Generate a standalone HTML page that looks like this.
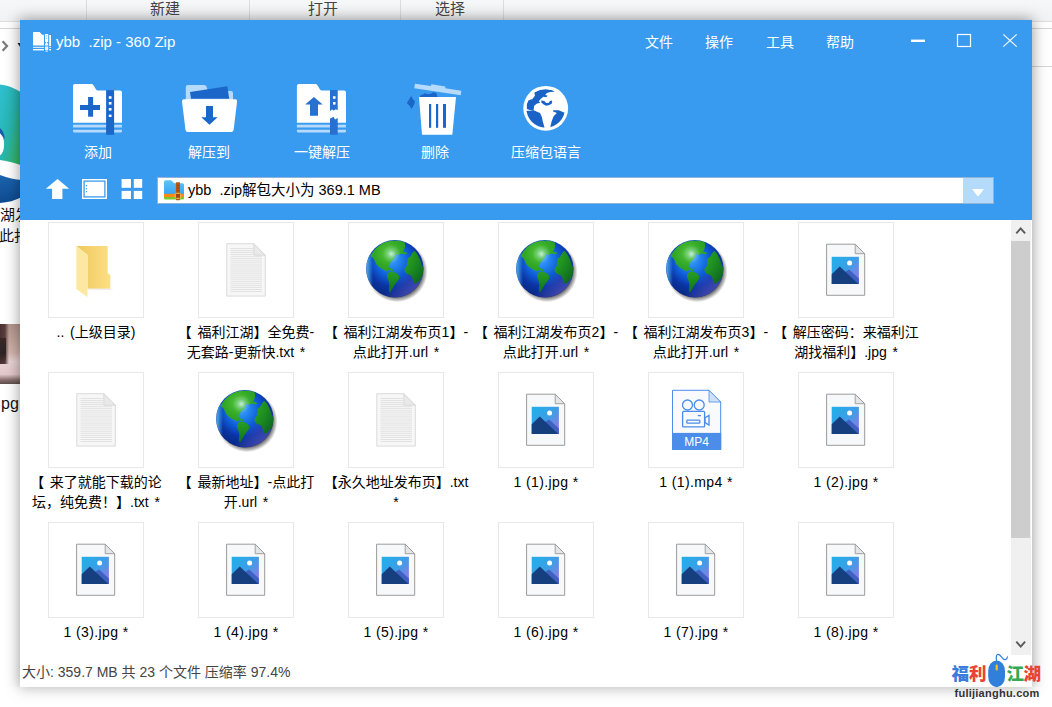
<!DOCTYPE html>
<html lang="zh-CN">
<head>
<meta charset="utf-8">
<title>ybb .zip - 360 Zip</title>
<style>
*{box-sizing:border-box;margin:0;padding:0}
html,body{width:1052px;height:707px;overflow:hidden;background:#fff}
body{position:relative;font-family:"Liberation Sans","Noto Sans CJK SC",sans-serif;color:#000}
.abs{position:absolute}
/* ---------- explorer window behind ---------- */
#ribbon{left:0;top:0;width:1052px;height:22px;background:linear-gradient(#f6f7f8,#f1f2f4);border-bottom:1px solid #dcdddf}
#ribbon i{position:absolute;top:0;width:1px;height:22px;background:#dcdde0}
#ribbon span{position:absolute;top:-2px;font-size:15px;line-height:22px;color:#444;white-space:nowrap;transform:translateX(-50%)}
.bgline{height:1px;background:#d6d6d6}
.bgtxt{font-size:15px;line-height:20px;color:#111;white-space:nowrap}
/* ---------- 360zip window ---------- */
#win{left:20px;top:20px;width:1012px;height:667px;background:#fff;box-shadow:0 0 13px 1px rgba(0,0,0,.38)}
#hdr{left:0;top:0;width:1012px;height:200px;background:#399bf0}
#title{left:36px;top:11px;font-size:15px;line-height:22px;color:#fff;white-space:pre}
.menu{top:11px;font-size:14px;line-height:22px;color:#fff;white-space:nowrap}
.tb{top:121px;width:120px;text-align:center;font-size:14px;line-height:22px;color:#fff;white-space:nowrap}
#addr{left:137px;top:157px;width:836.5px;height:27px;background:#fff;border:1px solid #8fb4d8}
#addr span{position:absolute;left:30px;top:1px;font-size:14.5px;line-height:22px;color:#000;white-space:pre}
#dd{left:943px;top:158px;width:29.5px;height:25px;background:#b4dafc}
/* ---------- file list ---------- */
.th{width:96px;height:96px;border:1px solid #e8e8e8;background:#fff}
.lb{word-spacing:1.8px}
.lb.lt{letter-spacing:.4px;word-spacing:0}
.lb{width:170px;text-align:center;font-size:14px;line-height:19.5px;color:#000;white-space:nowrap}
#sbar{left:991px;top:200px;width:20px;height:435px;background:#f0f0f0}
#thumb{left:991px;top:221px;width:19px;height:297px;background:#cdcdcd}
#status{left:2px;top:640.5px;font-size:14px;line-height:22px;color:#444;white-space:nowrap}
.wmc{top:10px;font-size:17.5px;line-height:26px;font-weight:900;font-family:"Noto Sans CJK SC","Liberation Sans",sans-serif}
#wmu{left:10.5px;top:34.5px;font-size:11px;line-height:16px;font-weight:bold;color:#333;letter-spacing:.25px;white-space:nowrap}
</style>
</head>
<body>

<!-- ===== background explorer window ===== -->
<div id="ribbon" class="abs">
  <i style="left:86px"></i><i style="left:249px"></i><i style="left:400px"></i><i style="left:503px"></i>
  <span style="left:165px">新建</span><span style="left:323px">打开</span><span style="left:450px">选择</span>
</div>
<div class="abs bgline" style="left:0;top:28px;width:20px"></div>
<div class="abs bgline" style="left:1032px;top:28px;width:20px"></div>
<div class="abs bgline" style="left:1032px;top:66px;width:20px"></div>
<svg class="abs" style="left:0;top:36px" width="22" height="20" viewBox="0 0 22 20">
  <path d="M2.6 5.2 L7 10 L2.6 14.8" fill="none" stroke="#7a7a7a" stroke-width="2.2"/>
  <path d="M17.5 7 L21 12.5 L24.5 7Z" fill="#222"/>
</svg>
<!-- edge-like icon fragment -->
<svg class="abs" style="left:0;top:82px" width="22" height="128" viewBox="0 0 22 128">
  <defs>
    <linearGradient id="eg1" x1="0" y1="0" x2="1" y2="1">
      <stop offset="0" stop-color="#2fc0d0"/><stop offset=".5" stop-color="#27b5b0"/><stop offset="1" stop-color="#3bb54a"/>
    </linearGradient>
    <linearGradient id="eg2" x1="0" y1="0" x2="0" y2="1">
      <stop offset="0" stop-color="#1b64b0"/><stop offset="1" stop-color="#0f4a8f"/>
    </linearGradient>
  </defs>
  <path d="M0 2.5 C8 3.5 15 6 22 11 L22 83.5 C15 81 8 79 0 78 L0 73.5 C5.5 70 5.5 55 0 51Z" fill="url(#eg1)"/>
  <path d="M0 46 C3 48.5 4.8 53 4.6 57 L0 51Z" fill="#1a5aa8"/>
  <path d="M0 93 C8 96 15 97.5 22 98 L22 115 C15 118.5 8 120.5 0 121Z" fill="url(#eg2)"/>
</svg>
<div class="abs bgtxt" style="left:0px;top:205px">湖发</div>
<div class="abs bgtxt" style="left:-1px;top:226px">此打</div>
<div class="abs" style="left:0;top:324px;width:20px;height:60px;background:linear-gradient(180deg,#b3958d 0,#c6a9a1 30%,#d4b5ae 48%,#ead3d5 62%,#e2c8ca 84%,#8a7070 93%,#5e4c4c 100%)"></div>
<div class="abs" style="left:0;top:324px;width:9px;height:40px;background:linear-gradient(90deg,#4a3030 0,#5a3e3c 55%,rgba(120,90,85,0) 100%)"></div>
<div class="abs" style="left:0;top:338px;width:6px;height:26px;background:linear-gradient(180deg,#3a2828,#2e2424 60%,rgba(60,44,44,0))"></div>
<div class="abs bgtxt" style="left:1px;top:394px;font-size:16px">pg</div>

<!-- ===== 360 zip window ===== -->
<div id="win" class="abs">
  <div id="hdr" class="abs">
    <svg class="abs" style="left:13px;top:11px" width="20" height="22" viewBox="0 0 20 22">
      <path d="M0 1.6 Q0 1 .6 1 L6.6 1 L9 3.7 L11 3.7 L11 14.6 L0 14.6Z" fill="#fff"/>
      <rect x="0" y="15.8" width="11" height="1.2" fill="#d6eafc"/>
      <rect x="0" y="18" width="11" height="1.4" fill="#fff"/>
      <rect x="12" y="3" width="3.2" height="8" fill="#fff"/>
      <rect x="13.2" y="4.2" width=".9" height="1.4" fill="#7dbcf5"/><rect x="13.2" y="6.6" width=".9" height="1.4" fill="#7dbcf5"/>
      <path d="M12 13 L13.6 10.8 L15.2 13 L15.2 14.4 L12 14.4Z" fill="#fff"/>
      <rect x="12" y="15.4" width="3.2" height="3.6" fill="#e4f1fd"/>
      <rect x="12.4" y="19.6" width="2.6" height=".9" fill="#fff"/>
      <rect x="16.2" y="4" width="1.8" height="11" fill="#fff"/>
      <rect x="16.2" y="15.8" width="1.8" height="1.2" fill="#d6eafc"/>
      <rect x="16.2" y="18" width="1.8" height="1.4" fill="#fff"/>
    </svg>
    <div id="title" class="abs">ybb  .zip - 360 Zip</div>
    <div class="abs menu" style="left:625px">文件</div>
    <div class="abs menu" style="left:685px">操作</div>
    <div class="abs menu" style="left:746px">工具</div>
    <div class="abs menu" style="left:806px">帮助</div>
    <svg class="abs" style="left:885px;top:10px" width="120" height="22" viewBox="0 0 120 22">
      <rect x="6" y="9.6" width="14" height="2.4" fill="#fff"/>
      <rect x="52.5" y="4.5" width="13" height="12" fill="none" stroke="#fff" stroke-width="1.2"/>
      <path d="M98.3 4.3 L111.7 16.7 M111.7 4.3 L98.3 16.7" stroke="#fff" stroke-width="1.1" fill="none"/>
    </svg>
    <!-- add -->
    <svg class="abs" style="left:46px;top:58px" width="66" height="66" viewBox="0 0 66 66">
      <path d="M7 8 Q7 6.1 9 6.1 L25.4 6.1 Q26.8 6.1 27.5 7.3 L30.1 11.6 Q30.8 12.6 32 12.6 L54 12.6 Q56 12.6 56 14.6 L56 44.8 L7 44.8Z" fill="#fff"/>
      <rect x="7" y="46.7" width="49" height="2.8" fill="#b5dafb"/>
      <path d="M7 51.8 H56 V53 Q56 54.6 54.4 54.6 H8.6 Q7 54.6 7 53Z" fill="#b5dafb"/>
      <rect x="40.1" y="12.1" width="8" height="44.7" fill="#1a66c9"/>
      <rect x="42.8" y="18.2" width="2.7" height="2.6" fill="#fff"/><rect x="42.8" y="24" width="2.7" height="2.6" fill="#fff"/>
      <rect x="42.8" y="30" width="2.7" height="2.6" fill="#fff"/><rect x="42.8" y="36.6" width="2.7" height="2.4" fill="#fff"/>
      <rect x="14" y="27" width="20" height="5" fill="#1a66c9"/><rect x="22.1" y="19" width="5" height="19.7" fill="#1a66c9"/>
    </svg>
    <div class="abs tb" style="left:18px">添加</div>
    <!-- extract to -->
    <svg class="abs" style="left:156px;top:58px" width="66" height="66" viewBox="0 0 66 66">
      <path d="M9.8 9 Q9.8 7 11.8 7 L28 7 Q29.6 7 30.3 8.3 L32 12.6 L55 12.9 Q57 13 57 15 L57 22 L9.8 22Z" fill="#b5dafb"/>
      <path d="M14 14 L51.4 8.2 L53.2 20.8 L15 20.8Z" fill="#1a66c9"/>
      <path d="M8 21.3 L59.2 21.3 Q61.4 21.3 61.1 23.4 L57.6 52 Q57.3 54 55.3 54 L11.8 54 Q9.8 54 9.5 52 L6 23.4 Q5.8 21.3 8 21.3Z" fill="#fff"/>
      <path d="M30 28 H37 V39.2 H41.6 L33.5 46.8 L25.3 39.2 H30Z" fill="#1a66c9"/>
    </svg>
    <div class="abs tb" style="left:129px">解压到</div>
    <!-- one click extract -->
    <svg class="abs" style="left:269px;top:58px" width="66" height="66" viewBox="0 0 66 66">
      <path d="M7.9 8 Q7.9 6.1 9.9 6.1 L26.3 6.1 Q27.7 6.1 28.4 7.3 L31 11.6 Q31.7 12.6 32.9 12.6 L55 12.6 Q57 12.6 57 14.6 L57 44.8 L7.9 44.8Z" fill="#fff"/>
      <rect x="7.9" y="46.7" width="49.1" height="2.8" fill="#b5dafb"/>
      <path d="M7.9 51.8 H57 V53 Q57 54.6 55.4 54.6 H9.5 Q7.9 54.6 7.9 53Z" fill="#b5dafb"/>
      <path d="M41 12.1 H48.7 V32.2 L46.8 31.2 L44.8 32.6 L43 31.4 L41 33Z" fill="#2870d0"/>
      <path d="M41 40.4 L43 39.8 L44.6 38.8 L46 41.6 L48.7 40 V56.8 H41Z" fill="#2870d0"/>
      <rect x="44" y="18.2" width="2.5" height="2.6" fill="#fff"/><rect x="44" y="24" width="2.5" height="2.6" fill="#fff"/>
      <path d="M24.9 19 L33.7 26.6 H29 V37.8 H21 V26.6 H16.2Z" fill="#2870d0"/>
    </svg>
    <div class="abs tb" style="left:242px">一键解压</div>
    <!-- delete -->
    <svg class="abs" style="left:380px;top:58px" width="66" height="66" viewBox="0 0 66 66">
      <path d="M19 19 H56 L52.3 56.8 H22Z" fill="#fff"/>
      <rect x="29" y="26" width="2.2" height="23.8" fill="#1a66c9"/><rect x="36" y="26" width="2.2" height="23.8" fill="#1a66c9"/><rect x="43" y="26" width="3" height="23.8" fill="#1a66c9"/>
      <path d="M20 19 Q20 17 23 16.6 L25 15 L27 16.2 L31 15.8 L33.5 14 L36.5 15.2 L37.4 19Z" fill="#1a66c9"/>
      <path d="M15 5.8 L31 8.1 L31.4 6.3 L45.4 8.4 L45.2 10.2 L61.3 12.7 L60.7 17.2 L14.3 10.2Z" fill="#b5dafb"/>
      <path d="M11.2 18 Q12.6 21 15 23.4 Q14.4 27.2 11.6 31 Q9.8 27.6 6.8 25 Q9 21.6 11.2 18Z" fill="#1a66c9"/>
    </svg>
    <div class="abs tb" style="left:355px">删除</div>
    <!-- language -->
    <svg class="abs" style="left:493px;top:58px" width="66" height="66" viewBox="0 0 66 66">
      <defs><clipPath id="lgc"><circle cx="350" cy="325" r="207"/></clipPath></defs>
      <circle cx="32.7" cy="30.3" r="22.4" fill="#fff"/>
      <g fill="#1a63c6" transform="scale(.09337)" clip-path="url(#lgc)">
        <path d="M148 334 L146 284 L164 242 L208 226 L235 190 L228 152 L288 128 L350 120 L422 130 L446 148 L400 150 L362 160 L345 182 L372 190 L355 206 L325 200 L296 225 L276 250 L292 266 L252 276 L226 300 L221 342 L186 346 L150 332Z"/>
        <path d="M304 240 L335 245 L355 268 L385 265 L395 245 L418 240 L419 270 L391 288 L355 297 L325 282 L303 262Z"/>
        <path d="M120 352 L190 350 L216 344 L250 360 L290 375 L310 420 L320 470 L336 522 L336 570 L120 570Z"/>
        <path d="M430 345 L490 345 L546 370 L590 370 L590 570 L398 570 L400 520 L415 460 L435 410 L470 375 L430 360Z"/>
      </g>
    </svg>
    <div class="abs tb" style="left:466px">压缩包语言</div>
    <svg class="abs" style="left:20px;top:155px" width="110" height="30" viewBox="0 0 110 30">
      <path d="M17.5 4 L29.2 13.7 H22.4 V24 H12.1 V13.7 H5.8Z" fill="#fff"/>
      <rect x="42" y="4" width="25" height="20" fill="#fff"/>
      <rect x="44.1" y="6.1" width="20.8" height="15.8" fill="#fff" stroke="#399bf0" stroke-width="1.3"/>
      <rect x="46" y="10" width="1" height="1.2" fill="#399bf0"/><rect x="46" y="13" width="1" height="1.2" fill="#399bf0"/><rect x="46" y="16" width="1" height="1.2" fill="#399bf0"/>
      <rect x="81.6" y="4" width="9.4" height="8.8" fill="#fff"/><rect x="93.8" y="4" width="8.4" height="8.8" fill="#fff"/>
      <rect x="81.6" y="15.9" width="9.4" height="8.1" fill="#fff"/><rect x="93.8" y="15.9" width="8.4" height="8.1" fill="#fff"/>
    </svg>
    <div id="addr" class="abs">
      <svg class="abs" style="left:5px;top:1px" width="24" height="24" viewBox="0 0 24 24">
        <defs><linearGradient id="zg" x1="0" y1="0" x2="0" y2="1"><stop offset="0" stop-color="#5ec4f6"/><stop offset="1" stop-color="#3aa5f5"/></linearGradient></defs>
        <path d="M1 3 Q1 1.3 2.7 1.3 L7.6 1.3 Q8.4 1.3 9 2 L10.6 3.8 Q11 4.2 11.8 4.2 L19.4 4.2 Q21 4.2 21 5.8 L21 15 L1 15Z" fill="url(#zg)"/>
        <rect x="1" y="14.8" width="20" height="3.4" fill="#fb8a0e"/>
        <path d="M1 18 H21 V19.2 Q21 20.5 19.7 20.5 H2.3 Q1 20.5 1 19.2Z" fill="#79c832"/>
        <rect x="12.9" y="3.2" width="4.1" height="18" rx=".6" fill="#b8560f"/>
        <rect x="14" y="6" width="1.9" height=".7" fill="#8a3c06"/><rect x="14" y="8.6" width="1.9" height=".7" fill="#8a3c06"/><rect x="14" y="11.2" width="1.9" height=".7" fill="#8a3c06"/>
        <rect x="12.3" y="14.3" width="5.3" height="5" rx="1" fill="#a04a0c" stroke="#f9bd5c" stroke-width="1"/>
      </svg>
      <span>ybb  .zip解包大小为 369.1 MB</span>
    </div>
    <div id="dd" class="abs"><svg class="abs" style="left:8px;top:10px" width="14" height="9" viewBox="0 0 14 9"><path d="M1 1 H13 L7.6 8 H6.4Z" fill="#fff"/></svg></div>
  </div>
  <!--FILES-BEGIN-->
  <div class="abs th" style="left:28px;top:202px"><svg width="94" height="94" viewBox="1 1 94 94"><defs><linearGradient id="fg0" x1="0" y1="0" x2="1" y2="0"><stop offset="0" stop-color="#ecc85c"/><stop offset=".35" stop-color="#f3d06a"/><stop offset="1" stop-color="#fcdf86"/></linearGradient></defs>
<path d="M28.3 24 H59.7 V51 L62.3 53.2 V66.8 H39.5 V33Z" fill="url(#fg0)"/>
<path d="M28.3 24 L39.5 33 V75 L28.3 67Z" fill="#fde8a2"/>
<path d="M39.5 66.8 H62.3 L66 67.8 H39.5Z" fill="#e9e9e9"/></svg></div>
  <div class="abs lb" style="left:-9px;top:303px">.. (上级目录)</div>
  <div class="abs th" style="left:178px;top:202px"><svg width="94" height="94" viewBox="1 1 94 94">
<path d="M28.8 21.7 H55.8 L67.3 33.2 V74.1 H28.8Z" fill="#f7f7f7" stroke="#dadada" stroke-width="1"/>
<path d="M55.8 21.7 V33.2 H67.3Z" fill="#e9e9e9" stroke="#d4d4d4" stroke-width=".8"/>
<g stroke="#e1e1e1" stroke-width="1"><path d="M32.5 26.5 H55"/><path d="M32.5 28.6 H55"/><path d="M32.5 30.6 H55"/><path d="M32.5 32.6 H55"/><path d="M32.5 34.7 H64"/><path d="M32.5 36.7 H64"/><path d="M32.5 38.8 H64"/><path d="M32.5 40.8 H64"/><path d="M32.5 42.9 H64"/><path d="M32.5 44.9 H64"/><path d="M32.5 47.0 H64"/><path d="M32.5 49.0 H64"/><path d="M32.5 51.1 H64"/><path d="M32.5 53.1 H64"/><path d="M32.5 55.2 H64"/><path d="M32.5 57.2 H64"/><path d="M32.5 59.3 H64"/><path d="M32.5 61.3 H64"/><path d="M32.5 63.4 H64"/><path d="M32.5 65.4 H64"/><path d="M32.5 67.5 H64"/><path d="M32.5 69.5 H64"/></g></svg></div>
  <div class="abs lb" style="left:141px;top:303px">【 福利江湖】全免费-<br>无套路-更新快.txt *</div>
  <div class="abs th" style="left:328px;top:202px"><svg width="94" height="94" viewBox="1 1 94 94"><defs>
<radialGradient id="go2" cx="46" cy="40" r="36" fx="42" fy="36" gradientUnits="userSpaceOnUse"><stop offset="0" stop-color="#49a8fa"/><stop offset=".25" stop-color="#2182ee"/><stop offset=".48" stop-color="#0e5cd6"/><stop offset=".72" stop-color="#0a34a4"/><stop offset="1" stop-color="#08267e"/></radialGradient>
<radialGradient id="gs2" cx=".5" cy=".5" r=".5"><stop offset=".82" stop-color="#000" stop-opacity=".6"/><stop offset="1" stop-color="#000" stop-opacity="0"/></radialGradient>
<radialGradient id="gl2" cx="290" cy="190" r="430" gradientUnits="userSpaceOnUse"><stop offset="0" stop-color="#58c63a"/><stop offset=".3" stop-color="#34a927"/><stop offset=".65" stop-color="#1d8e1f"/><stop offset="1" stop-color="#0d6424"/></radialGradient>
<radialGradient id="gh2" cx="43.5" cy="32" r="9" gradientUnits="userSpaceOnUse"><stop offset="0" stop-color="#e8fbff" stop-opacity=".8"/><stop offset=".5" stop-color="#bff0ff" stop-opacity=".3"/><stop offset="1" stop-color="#bff0ff" stop-opacity="0"/></radialGradient>
<linearGradient id="gp2" x1="0" y1="0" x2="1" y2="1"><stop offset=".62" stop-color="#7a66d8" stop-opacity="0"/><stop offset=".92" stop-color="#7a66d8" stop-opacity=".65"/></linearGradient>
<linearGradient id="gr2" x1="0" y1="0" x2="1" y2="0"><stop offset="0" stop-color="#58c6f8" stop-opacity=".9"/><stop offset=".12" stop-color="#58c6f8" stop-opacity="0"/></linearGradient>
<clipPath id="gc2"><circle cx="46.8" cy="46.8" r="28.6"/></clipPath></defs>
<circle cx="49" cy="49.6" r="30.6" fill="url(#gs2)"/>
<circle cx="46.8" cy="46.8" r="28.7" fill="url(#go2)"/>
<g clip-path="url(#gc2)">
<circle cx="46.8" cy="46.8" r="28.7" fill="url(#gp2)"/>
<g fill="url(#gl2)" transform="translate(12,12) scale(.099)">
<path d="M108 222 L135 175 L172 133 L215 100 L265 78 L320 68 L380 66 L432 73 L455 90 L455 125 L445 160 L432 180 L462 182 L478 197 L455 207 L425 197 L398 205 L378 218 L372 200 L355 215 L350 240 L335 262 L312 280 L295 305 L288 325 L300 345 L325 352 L340 370 L318 375 L300 362 L280 372 L262 378 L240 360 L215 348 L190 330 L165 305 L150 275 L140 250 L120 232Z"/>
<path d="M280 398 L300 385 L330 380 L360 392 L385 410 L400 432 L390 460 L372 485 L352 510 L335 540 L318 570 L305 590 L292 575 L292 545 L298 515 L290 480 L278 450 L272 420Z"/>
<path d="M545 168 L565 185 L585 215 L600 245 L612 275 L622 310 L640 345 L640 420 L600 470 L570 500 L548 500 L535 465 L524 432 L505 415 L475 405 L455 385 L448 360 L458 335 L478 318 L470 300 L482 280 L475 260 L490 240 L505 235 L515 215 L530 190Z"/>
</g>
<circle cx="46.8" cy="46.8" r="28.7" fill="url(#gh2)"/>
<circle cx="46.8" cy="46.8" r="28.7" fill="url(#gr2)"/>
</g>
</svg></div>
  <div class="abs lb" style="left:291px;top:303px">【 福利江湖发布页1】-<br>点此打开.url *</div>
  <div class="abs th" style="left:478px;top:202px"><svg width="94" height="94" viewBox="1 1 94 94"><defs>
<radialGradient id="go3" cx="46" cy="40" r="36" fx="42" fy="36" gradientUnits="userSpaceOnUse"><stop offset="0" stop-color="#49a8fa"/><stop offset=".25" stop-color="#2182ee"/><stop offset=".48" stop-color="#0e5cd6"/><stop offset=".72" stop-color="#0a34a4"/><stop offset="1" stop-color="#08267e"/></radialGradient>
<radialGradient id="gs3" cx=".5" cy=".5" r=".5"><stop offset=".82" stop-color="#000" stop-opacity=".6"/><stop offset="1" stop-color="#000" stop-opacity="0"/></radialGradient>
<radialGradient id="gl3" cx="290" cy="190" r="430" gradientUnits="userSpaceOnUse"><stop offset="0" stop-color="#58c63a"/><stop offset=".3" stop-color="#34a927"/><stop offset=".65" stop-color="#1d8e1f"/><stop offset="1" stop-color="#0d6424"/></radialGradient>
<radialGradient id="gh3" cx="43.5" cy="32" r="9" gradientUnits="userSpaceOnUse"><stop offset="0" stop-color="#e8fbff" stop-opacity=".8"/><stop offset=".5" stop-color="#bff0ff" stop-opacity=".3"/><stop offset="1" stop-color="#bff0ff" stop-opacity="0"/></radialGradient>
<linearGradient id="gp3" x1="0" y1="0" x2="1" y2="1"><stop offset=".62" stop-color="#7a66d8" stop-opacity="0"/><stop offset=".92" stop-color="#7a66d8" stop-opacity=".65"/></linearGradient>
<linearGradient id="gr3" x1="0" y1="0" x2="1" y2="0"><stop offset="0" stop-color="#58c6f8" stop-opacity=".9"/><stop offset=".12" stop-color="#58c6f8" stop-opacity="0"/></linearGradient>
<clipPath id="gc3"><circle cx="46.8" cy="46.8" r="28.6"/></clipPath></defs>
<circle cx="49" cy="49.6" r="30.6" fill="url(#gs3)"/>
<circle cx="46.8" cy="46.8" r="28.7" fill="url(#go3)"/>
<g clip-path="url(#gc3)">
<circle cx="46.8" cy="46.8" r="28.7" fill="url(#gp3)"/>
<g fill="url(#gl3)" transform="translate(12,12) scale(.099)">
<path d="M108 222 L135 175 L172 133 L215 100 L265 78 L320 68 L380 66 L432 73 L455 90 L455 125 L445 160 L432 180 L462 182 L478 197 L455 207 L425 197 L398 205 L378 218 L372 200 L355 215 L350 240 L335 262 L312 280 L295 305 L288 325 L300 345 L325 352 L340 370 L318 375 L300 362 L280 372 L262 378 L240 360 L215 348 L190 330 L165 305 L150 275 L140 250 L120 232Z"/>
<path d="M280 398 L300 385 L330 380 L360 392 L385 410 L400 432 L390 460 L372 485 L352 510 L335 540 L318 570 L305 590 L292 575 L292 545 L298 515 L290 480 L278 450 L272 420Z"/>
<path d="M545 168 L565 185 L585 215 L600 245 L612 275 L622 310 L640 345 L640 420 L600 470 L570 500 L548 500 L535 465 L524 432 L505 415 L475 405 L455 385 L448 360 L458 335 L478 318 L470 300 L482 280 L475 260 L490 240 L505 235 L515 215 L530 190Z"/>
</g>
<circle cx="46.8" cy="46.8" r="28.7" fill="url(#gh3)"/>
<circle cx="46.8" cy="46.8" r="28.7" fill="url(#gr3)"/>
</g>
</svg></div>
  <div class="abs lb" style="left:441px;top:303px">【 福利江湖发布页2】-<br>点此打开.url *</div>
  <div class="abs th" style="left:628px;top:202px"><svg width="94" height="94" viewBox="1 1 94 94"><defs>
<radialGradient id="go4" cx="46" cy="40" r="36" fx="42" fy="36" gradientUnits="userSpaceOnUse"><stop offset="0" stop-color="#49a8fa"/><stop offset=".25" stop-color="#2182ee"/><stop offset=".48" stop-color="#0e5cd6"/><stop offset=".72" stop-color="#0a34a4"/><stop offset="1" stop-color="#08267e"/></radialGradient>
<radialGradient id="gs4" cx=".5" cy=".5" r=".5"><stop offset=".82" stop-color="#000" stop-opacity=".6"/><stop offset="1" stop-color="#000" stop-opacity="0"/></radialGradient>
<radialGradient id="gl4" cx="290" cy="190" r="430" gradientUnits="userSpaceOnUse"><stop offset="0" stop-color="#58c63a"/><stop offset=".3" stop-color="#34a927"/><stop offset=".65" stop-color="#1d8e1f"/><stop offset="1" stop-color="#0d6424"/></radialGradient>
<radialGradient id="gh4" cx="43.5" cy="32" r="9" gradientUnits="userSpaceOnUse"><stop offset="0" stop-color="#e8fbff" stop-opacity=".8"/><stop offset=".5" stop-color="#bff0ff" stop-opacity=".3"/><stop offset="1" stop-color="#bff0ff" stop-opacity="0"/></radialGradient>
<linearGradient id="gp4" x1="0" y1="0" x2="1" y2="1"><stop offset=".62" stop-color="#7a66d8" stop-opacity="0"/><stop offset=".92" stop-color="#7a66d8" stop-opacity=".65"/></linearGradient>
<linearGradient id="gr4" x1="0" y1="0" x2="1" y2="0"><stop offset="0" stop-color="#58c6f8" stop-opacity=".9"/><stop offset=".12" stop-color="#58c6f8" stop-opacity="0"/></linearGradient>
<clipPath id="gc4"><circle cx="46.8" cy="46.8" r="28.6"/></clipPath></defs>
<circle cx="49" cy="49.6" r="30.6" fill="url(#gs4)"/>
<circle cx="46.8" cy="46.8" r="28.7" fill="url(#go4)"/>
<g clip-path="url(#gc4)">
<circle cx="46.8" cy="46.8" r="28.7" fill="url(#gp4)"/>
<g fill="url(#gl4)" transform="translate(12,12) scale(.099)">
<path d="M108 222 L135 175 L172 133 L215 100 L265 78 L320 68 L380 66 L432 73 L455 90 L455 125 L445 160 L432 180 L462 182 L478 197 L455 207 L425 197 L398 205 L378 218 L372 200 L355 215 L350 240 L335 262 L312 280 L295 305 L288 325 L300 345 L325 352 L340 370 L318 375 L300 362 L280 372 L262 378 L240 360 L215 348 L190 330 L165 305 L150 275 L140 250 L120 232Z"/>
<path d="M280 398 L300 385 L330 380 L360 392 L385 410 L400 432 L390 460 L372 485 L352 510 L335 540 L318 570 L305 590 L292 575 L292 545 L298 515 L290 480 L278 450 L272 420Z"/>
<path d="M545 168 L565 185 L585 215 L600 245 L612 275 L622 310 L640 345 L640 420 L600 470 L570 500 L548 500 L535 465 L524 432 L505 415 L475 405 L455 385 L448 360 L458 335 L478 318 L470 300 L482 280 L475 260 L490 240 L505 235 L515 215 L530 190Z"/>
</g>
<circle cx="46.8" cy="46.8" r="28.7" fill="url(#gh4)"/>
<circle cx="46.8" cy="46.8" r="28.7" fill="url(#gr4)"/>
</g>
</svg></div>
  <div class="abs lb" style="left:591px;top:303px">【 福利江湖发布页3】-<br>点此打开.url *</div>
  <div class="abs th" style="left:778px;top:202px"><svg width="94" height="94" viewBox="1 1 94 94"><defs><linearGradient id="ig5" x1="0" y1="0" x2="1" y2=".8"><stop offset="0" stop-color="#1fb0ea"/><stop offset=".55" stop-color="#3b9fe8"/><stop offset="1" stop-color="#8f7ae0"/></linearGradient></defs>
<path d="M28.6 22.2 H57.2 L66.7 31.7 V73.3 H28.6Z" fill="#f7f8f9" stroke="#9b9b9b" stroke-width="1"/>
<path d="M57.2 22.2 V31.7 H66.7Z" fill="#e4e5e6" stroke="#9b9b9b" stroke-width=".9"/>
<rect x="33.7" y="34.8" width="27.2" height="27.2" fill="url(#ig5)"/>
<path d="M47 50 L51.1 47.4 L60.9 56.4 V62 H50Z" fill="#4060c4"/>
<path d="M33.7 52.3 L41.8 44.4 L60.4 62 H33.7Z" fill="#163f7f"/>
<circle cx="51.6" cy="41.1" r="2.5" fill="#fff"/></svg></div>
  <div class="abs lb" style="left:741px;top:303px">【 解压密码：来福利江<br>湖找福利】.jpg *</div>
  <div class="abs th" style="left:28px;top:352px"><svg width="94" height="94" viewBox="1 1 94 94">
<path d="M28.8 21.7 H55.8 L67.3 33.2 V74.1 H28.8Z" fill="#f7f7f7" stroke="#dadada" stroke-width="1"/>
<path d="M55.8 21.7 V33.2 H67.3Z" fill="#e9e9e9" stroke="#d4d4d4" stroke-width=".8"/>
<g stroke="#e1e1e1" stroke-width="1"><path d="M32.5 26.5 H55"/><path d="M32.5 28.6 H55"/><path d="M32.5 30.6 H55"/><path d="M32.5 32.6 H55"/><path d="M32.5 34.7 H64"/><path d="M32.5 36.7 H64"/><path d="M32.5 38.8 H64"/><path d="M32.5 40.8 H64"/><path d="M32.5 42.9 H64"/><path d="M32.5 44.9 H64"/><path d="M32.5 47.0 H64"/><path d="M32.5 49.0 H64"/><path d="M32.5 51.1 H64"/><path d="M32.5 53.1 H64"/><path d="M32.5 55.2 H64"/><path d="M32.5 57.2 H64"/><path d="M32.5 59.3 H64"/><path d="M32.5 61.3 H64"/><path d="M32.5 63.4 H64"/><path d="M32.5 65.4 H64"/><path d="M32.5 67.5 H64"/><path d="M32.5 69.5 H64"/></g></svg></div>
  <div class="abs lb" style="left:-9px;top:453px">【 来了就能下载的论<br>坛，纯免费！】.txt *</div>
  <div class="abs th" style="left:178px;top:352px"><svg width="94" height="94" viewBox="1 1 94 94"><defs>
<radialGradient id="go7" cx="46" cy="40" r="36" fx="42" fy="36" gradientUnits="userSpaceOnUse"><stop offset="0" stop-color="#49a8fa"/><stop offset=".25" stop-color="#2182ee"/><stop offset=".48" stop-color="#0e5cd6"/><stop offset=".72" stop-color="#0a34a4"/><stop offset="1" stop-color="#08267e"/></radialGradient>
<radialGradient id="gs7" cx=".5" cy=".5" r=".5"><stop offset=".82" stop-color="#000" stop-opacity=".6"/><stop offset="1" stop-color="#000" stop-opacity="0"/></radialGradient>
<radialGradient id="gl7" cx="290" cy="190" r="430" gradientUnits="userSpaceOnUse"><stop offset="0" stop-color="#58c63a"/><stop offset=".3" stop-color="#34a927"/><stop offset=".65" stop-color="#1d8e1f"/><stop offset="1" stop-color="#0d6424"/></radialGradient>
<radialGradient id="gh7" cx="43.5" cy="32" r="9" gradientUnits="userSpaceOnUse"><stop offset="0" stop-color="#e8fbff" stop-opacity=".8"/><stop offset=".5" stop-color="#bff0ff" stop-opacity=".3"/><stop offset="1" stop-color="#bff0ff" stop-opacity="0"/></radialGradient>
<linearGradient id="gp7" x1="0" y1="0" x2="1" y2="1"><stop offset=".62" stop-color="#7a66d8" stop-opacity="0"/><stop offset=".92" stop-color="#7a66d8" stop-opacity=".65"/></linearGradient>
<linearGradient id="gr7" x1="0" y1="0" x2="1" y2="0"><stop offset="0" stop-color="#58c6f8" stop-opacity=".9"/><stop offset=".12" stop-color="#58c6f8" stop-opacity="0"/></linearGradient>
<clipPath id="gc7"><circle cx="46.8" cy="46.8" r="28.6"/></clipPath></defs>
<circle cx="49" cy="49.6" r="30.6" fill="url(#gs7)"/>
<circle cx="46.8" cy="46.8" r="28.7" fill="url(#go7)"/>
<g clip-path="url(#gc7)">
<circle cx="46.8" cy="46.8" r="28.7" fill="url(#gp7)"/>
<g fill="url(#gl7)" transform="translate(12,12) scale(.099)">
<path d="M108 222 L135 175 L172 133 L215 100 L265 78 L320 68 L380 66 L432 73 L455 90 L455 125 L445 160 L432 180 L462 182 L478 197 L455 207 L425 197 L398 205 L378 218 L372 200 L355 215 L350 240 L335 262 L312 280 L295 305 L288 325 L300 345 L325 352 L340 370 L318 375 L300 362 L280 372 L262 378 L240 360 L215 348 L190 330 L165 305 L150 275 L140 250 L120 232Z"/>
<path d="M280 398 L300 385 L330 380 L360 392 L385 410 L400 432 L390 460 L372 485 L352 510 L335 540 L318 570 L305 590 L292 575 L292 545 L298 515 L290 480 L278 450 L272 420Z"/>
<path d="M545 168 L565 185 L585 215 L600 245 L612 275 L622 310 L640 345 L640 420 L600 470 L570 500 L548 500 L535 465 L524 432 L505 415 L475 405 L455 385 L448 360 L458 335 L478 318 L470 300 L482 280 L475 260 L490 240 L505 235 L515 215 L530 190Z"/>
</g>
<circle cx="46.8" cy="46.8" r="28.7" fill="url(#gh7)"/>
<circle cx="46.8" cy="46.8" r="28.7" fill="url(#gr7)"/>
</g>
</svg></div>
  <div class="abs lb" style="left:141px;top:453px">【 最新地址】-点此打<br>开.url *</div>
  <div class="abs th" style="left:328px;top:352px"><svg width="94" height="94" viewBox="1 1 94 94">
<path d="M28.8 21.7 H55.8 L67.3 33.2 V74.1 H28.8Z" fill="#f7f7f7" stroke="#dadada" stroke-width="1"/>
<path d="M55.8 21.7 V33.2 H67.3Z" fill="#e9e9e9" stroke="#d4d4d4" stroke-width=".8"/>
<g stroke="#e1e1e1" stroke-width="1"><path d="M32.5 26.5 H55"/><path d="M32.5 28.6 H55"/><path d="M32.5 30.6 H55"/><path d="M32.5 32.6 H55"/><path d="M32.5 34.7 H64"/><path d="M32.5 36.7 H64"/><path d="M32.5 38.8 H64"/><path d="M32.5 40.8 H64"/><path d="M32.5 42.9 H64"/><path d="M32.5 44.9 H64"/><path d="M32.5 47.0 H64"/><path d="M32.5 49.0 H64"/><path d="M32.5 51.1 H64"/><path d="M32.5 53.1 H64"/><path d="M32.5 55.2 H64"/><path d="M32.5 57.2 H64"/><path d="M32.5 59.3 H64"/><path d="M32.5 61.3 H64"/><path d="M32.5 63.4 H64"/><path d="M32.5 65.4 H64"/><path d="M32.5 67.5 H64"/><path d="M32.5 69.5 H64"/></g></svg></div>
  <div class="abs lb" style="left:291px;top:453px">【永久地址发布页】.txt<br>*</div>
  <div class="abs th" style="left:478px;top:352px"><svg width="94" height="94" viewBox="1 1 94 94"><defs><linearGradient id="ig9" x1="0" y1="0" x2="1" y2=".8"><stop offset="0" stop-color="#1fb0ea"/><stop offset=".55" stop-color="#3b9fe8"/><stop offset="1" stop-color="#8f7ae0"/></linearGradient></defs>
<path d="M28.6 22.2 H57.2 L66.7 31.7 V73.3 H28.6Z" fill="#f7f8f9" stroke="#9b9b9b" stroke-width="1"/>
<path d="M57.2 22.2 V31.7 H66.7Z" fill="#e4e5e6" stroke="#9b9b9b" stroke-width=".9"/>
<rect x="33.7" y="34.8" width="27.2" height="27.2" fill="url(#ig9)"/>
<path d="M47 50 L51.1 47.4 L60.9 56.4 V62 H50Z" fill="#4060c4"/>
<path d="M33.7 52.3 L41.8 44.4 L60.4 62 H33.7Z" fill="#163f7f"/>
<circle cx="51.6" cy="41.1" r="2.5" fill="#fff"/></svg></div>
  <div class="abs lb lt" style="left:441px;top:453px">1 (1).jpg *</div>
  <div class="abs th" style="left:628px;top:352px"><svg width="94" height="94" viewBox="1 1 94 94">
<path d="M24.5 18.3 H61 L72.7 30 V77.5 H24.5Z" fill="#f8fafd" stroke="#4b8de9" stroke-width="1"/>
<path d="M61 18.3 V30 H72.7Z" fill="#cfe0f8" stroke="#4b8de9" stroke-width=".8"/>
<rect x="24" y="60.9" width="49.2" height="17.1" fill="#4b8de9"/>
<g fill="none" stroke="#4b8de9" stroke-width="1.3"><circle cx="39.5" cy="33" r="5"/><circle cx="51.2" cy="33" r="5"/>
<rect x="34.6" y="39.3" width="22" height="15.6" rx="1"/><rect x="38.8" y="48.2" width="13" height="3" rx=".8"/><path d="M49.8 43.6 H53"/>
<path d="M57 45.8 L61 43.4 V53 L57 50.6Z"/></g>
<text x="48.6" y="74.2" font-family="Liberation Sans, sans-serif" font-size="13.5" fill="#fff" text-anchor="middle" textLength="24.6" lengthAdjust="spacingAndGlyphs">MP4</text></svg></div>
  <div class="abs lb lt" style="left:591px;top:453px">1 (1).mp4 *</div>
  <div class="abs th" style="left:778px;top:352px"><svg width="94" height="94" viewBox="1 1 94 94"><defs><linearGradient id="ig11" x1="0" y1="0" x2="1" y2=".8"><stop offset="0" stop-color="#1fb0ea"/><stop offset=".55" stop-color="#3b9fe8"/><stop offset="1" stop-color="#8f7ae0"/></linearGradient></defs>
<path d="M28.6 22.2 H57.2 L66.7 31.7 V73.3 H28.6Z" fill="#f7f8f9" stroke="#9b9b9b" stroke-width="1"/>
<path d="M57.2 22.2 V31.7 H66.7Z" fill="#e4e5e6" stroke="#9b9b9b" stroke-width=".9"/>
<rect x="33.7" y="34.8" width="27.2" height="27.2" fill="url(#ig11)"/>
<path d="M47 50 L51.1 47.4 L60.9 56.4 V62 H50Z" fill="#4060c4"/>
<path d="M33.7 52.3 L41.8 44.4 L60.4 62 H33.7Z" fill="#163f7f"/>
<circle cx="51.6" cy="41.1" r="2.5" fill="#fff"/></svg></div>
  <div class="abs lb lt" style="left:741px;top:453px">1 (2).jpg *</div>
  <div class="abs th" style="left:28px;top:502px"><svg width="94" height="94" viewBox="1 1 94 94"><defs><linearGradient id="ig12" x1="0" y1="0" x2="1" y2=".8"><stop offset="0" stop-color="#1fb0ea"/><stop offset=".55" stop-color="#3b9fe8"/><stop offset="1" stop-color="#8f7ae0"/></linearGradient></defs>
<path d="M28.6 22.2 H57.2 L66.7 31.7 V73.3 H28.6Z" fill="#f7f8f9" stroke="#9b9b9b" stroke-width="1"/>
<path d="M57.2 22.2 V31.7 H66.7Z" fill="#e4e5e6" stroke="#9b9b9b" stroke-width=".9"/>
<rect x="33.7" y="34.8" width="27.2" height="27.2" fill="url(#ig12)"/>
<path d="M47 50 L51.1 47.4 L60.9 56.4 V62 H50Z" fill="#4060c4"/>
<path d="M33.7 52.3 L41.8 44.4 L60.4 62 H33.7Z" fill="#163f7f"/>
<circle cx="51.6" cy="41.1" r="2.5" fill="#fff"/></svg></div>
  <div class="abs lb lt" style="left:-9px;top:603px">1 (3).jpg *</div>
  <div class="abs th" style="left:178px;top:502px"><svg width="94" height="94" viewBox="1 1 94 94"><defs><linearGradient id="ig13" x1="0" y1="0" x2="1" y2=".8"><stop offset="0" stop-color="#1fb0ea"/><stop offset=".55" stop-color="#3b9fe8"/><stop offset="1" stop-color="#8f7ae0"/></linearGradient></defs>
<path d="M28.6 22.2 H57.2 L66.7 31.7 V73.3 H28.6Z" fill="#f7f8f9" stroke="#9b9b9b" stroke-width="1"/>
<path d="M57.2 22.2 V31.7 H66.7Z" fill="#e4e5e6" stroke="#9b9b9b" stroke-width=".9"/>
<rect x="33.7" y="34.8" width="27.2" height="27.2" fill="url(#ig13)"/>
<path d="M47 50 L51.1 47.4 L60.9 56.4 V62 H50Z" fill="#4060c4"/>
<path d="M33.7 52.3 L41.8 44.4 L60.4 62 H33.7Z" fill="#163f7f"/>
<circle cx="51.6" cy="41.1" r="2.5" fill="#fff"/></svg></div>
  <div class="abs lb lt" style="left:141px;top:603px">1 (4).jpg *</div>
  <div class="abs th" style="left:328px;top:502px"><svg width="94" height="94" viewBox="1 1 94 94"><defs><linearGradient id="ig14" x1="0" y1="0" x2="1" y2=".8"><stop offset="0" stop-color="#1fb0ea"/><stop offset=".55" stop-color="#3b9fe8"/><stop offset="1" stop-color="#8f7ae0"/></linearGradient></defs>
<path d="M28.6 22.2 H57.2 L66.7 31.7 V73.3 H28.6Z" fill="#f7f8f9" stroke="#9b9b9b" stroke-width="1"/>
<path d="M57.2 22.2 V31.7 H66.7Z" fill="#e4e5e6" stroke="#9b9b9b" stroke-width=".9"/>
<rect x="33.7" y="34.8" width="27.2" height="27.2" fill="url(#ig14)"/>
<path d="M47 50 L51.1 47.4 L60.9 56.4 V62 H50Z" fill="#4060c4"/>
<path d="M33.7 52.3 L41.8 44.4 L60.4 62 H33.7Z" fill="#163f7f"/>
<circle cx="51.6" cy="41.1" r="2.5" fill="#fff"/></svg></div>
  <div class="abs lb lt" style="left:291px;top:603px">1 (5).jpg *</div>
  <div class="abs th" style="left:478px;top:502px"><svg width="94" height="94" viewBox="1 1 94 94"><defs><linearGradient id="ig15" x1="0" y1="0" x2="1" y2=".8"><stop offset="0" stop-color="#1fb0ea"/><stop offset=".55" stop-color="#3b9fe8"/><stop offset="1" stop-color="#8f7ae0"/></linearGradient></defs>
<path d="M28.6 22.2 H57.2 L66.7 31.7 V73.3 H28.6Z" fill="#f7f8f9" stroke="#9b9b9b" stroke-width="1"/>
<path d="M57.2 22.2 V31.7 H66.7Z" fill="#e4e5e6" stroke="#9b9b9b" stroke-width=".9"/>
<rect x="33.7" y="34.8" width="27.2" height="27.2" fill="url(#ig15)"/>
<path d="M47 50 L51.1 47.4 L60.9 56.4 V62 H50Z" fill="#4060c4"/>
<path d="M33.7 52.3 L41.8 44.4 L60.4 62 H33.7Z" fill="#163f7f"/>
<circle cx="51.6" cy="41.1" r="2.5" fill="#fff"/></svg></div>
  <div class="abs lb lt" style="left:441px;top:603px">1 (6).jpg *</div>
  <div class="abs th" style="left:628px;top:502px"><svg width="94" height="94" viewBox="1 1 94 94"><defs><linearGradient id="ig16" x1="0" y1="0" x2="1" y2=".8"><stop offset="0" stop-color="#1fb0ea"/><stop offset=".55" stop-color="#3b9fe8"/><stop offset="1" stop-color="#8f7ae0"/></linearGradient></defs>
<path d="M28.6 22.2 H57.2 L66.7 31.7 V73.3 H28.6Z" fill="#f7f8f9" stroke="#9b9b9b" stroke-width="1"/>
<path d="M57.2 22.2 V31.7 H66.7Z" fill="#e4e5e6" stroke="#9b9b9b" stroke-width=".9"/>
<rect x="33.7" y="34.8" width="27.2" height="27.2" fill="url(#ig16)"/>
<path d="M47 50 L51.1 47.4 L60.9 56.4 V62 H50Z" fill="#4060c4"/>
<path d="M33.7 52.3 L41.8 44.4 L60.4 62 H33.7Z" fill="#163f7f"/>
<circle cx="51.6" cy="41.1" r="2.5" fill="#fff"/></svg></div>
  <div class="abs lb lt" style="left:591px;top:603px">1 (7).jpg *</div>
  <div class="abs th" style="left:778px;top:502px"><svg width="94" height="94" viewBox="1 1 94 94"><defs><linearGradient id="ig17" x1="0" y1="0" x2="1" y2=".8"><stop offset="0" stop-color="#1fb0ea"/><stop offset=".55" stop-color="#3b9fe8"/><stop offset="1" stop-color="#8f7ae0"/></linearGradient></defs>
<path d="M28.6 22.2 H57.2 L66.7 31.7 V73.3 H28.6Z" fill="#f7f8f9" stroke="#9b9b9b" stroke-width="1"/>
<path d="M57.2 22.2 V31.7 H66.7Z" fill="#e4e5e6" stroke="#9b9b9b" stroke-width=".9"/>
<rect x="33.7" y="34.8" width="27.2" height="27.2" fill="url(#ig17)"/>
<path d="M47 50 L51.1 47.4 L60.9 56.4 V62 H50Z" fill="#4060c4"/>
<path d="M33.7 52.3 L41.8 44.4 L60.4 62 H33.7Z" fill="#163f7f"/>
<circle cx="51.6" cy="41.1" r="2.5" fill="#fff"/></svg></div>
  <div class="abs lb lt" style="left:741px;top:603px">1 (8).jpg *</div>
  <!--FILES-END-->
  <!--SCROLL-BEGIN--><div id="sbar" class="abs"></div><div id="thumb" class="abs"></div>
  <svg class="abs" style="left:991px;top:200px" width="20" height="435" viewBox="0 0 20 435">
    <path d="M5.3 13.4 L9.7 8.4 L14.1 13.4" fill="none" stroke="#5a5a5a" stroke-width="1.9"/>
    <path d="M5.3 421.6 L9.7 426.6 L14.1 421.6" fill="none" stroke="#5a5a5a" stroke-width="1.9"/>
  </svg><!--SCROLL-END-->
  <div id="status" class="abs">大小: 359.7 MB 共 23 个文件 压缩率 97.4%</div>
</div>
<div class="abs" style="left:0;top:687px;width:1052px;height:20px;background:rgba(255,255,255,.25)"></div>
<div class="abs" id="wm" style="left:944px;top:650px;width:108px;height:57px">
  <span class="abs wmc" style="left:7.6px;color:#3b7ddd">福</span>
  <span class="abs wmc" style="left:25px;color:#ea4335">利</span>
  <svg class="abs" style="left:40px;top:0" width="30" height="40" viewBox="0 0 30 40">
    <path d="M12.6 11 C11.5 6 13 3.6 15 4.6 C17.6 6 18.6 10.4 21.4 9.6 C22.8 9.2 23.4 8 23.4 6.8" fill="none" stroke="#2f7fdb" stroke-width="1.2" stroke-linecap="round"/>
    <rect x="4.2" y="10.4" width="16.8" height="26.8" rx="8.4" ry="10.5" fill="#2f7fdb"/>
    <rect x="11.6" y="14.6" width="2.2" height="6" rx="1.1" fill="#fbc116"/>
  </svg>
  <span class="abs wmc" style="left:62.4px;color:#34a853">江</span>
  <span class="abs wmc" style="left:79.6px;color:#ea4335">湖</span>
  <span class="abs" id="wmu">fulijianghu.com</span>
</div>
</body>
</html>
